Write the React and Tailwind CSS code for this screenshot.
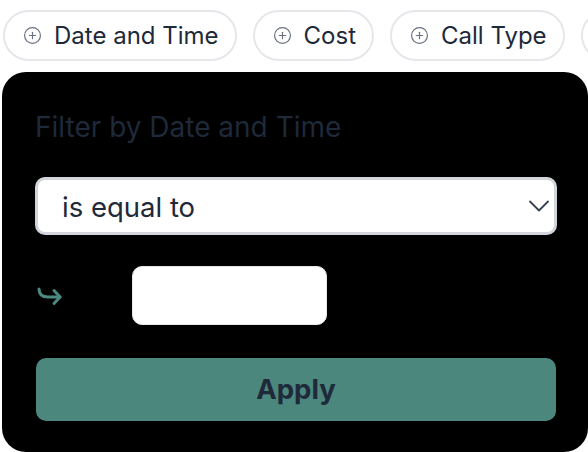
import React from 'react';
import { CirclePlus, ChevronDown } from 'lucide-react';

const chips = ['Date and Time', 'Cost', 'Call Type', 'Status'];

const Chip = ({ label }) => (
  <div className="h-[51px] shrink-0 rounded-full border-2 border-gray-200 bg-white pl-[18px] pr-[16px] flex items-center gap-[12px] text-[24px] text-gray-800">
    <CirclePlus className="w-[19px] h-[19px] text-gray-500" strokeWidth={1.5} />
    <span>{label}</span>
  </div>
);

export default function App() {
  return (
    <div className="w-[588px] h-[452px] bg-white overflow-hidden font-['Inter',sans-serif]">
      <div className="flex gap-[16px] pt-[10px] pl-[3px]">
        {chips.map((c) => (
          <Chip key={c} label={c} />
        ))}
      </div>

      <div className="ml-[2px] mt-[11px] w-[586px] h-[380px] bg-black rounded-[24px] pt-[38px] pl-[33px] pr-[29px]">
        <h3 className="text-[28px] leading-[34px] text-gray-800">Filter by Date and Time</h3>

        <div className="mt-[33px] h-[58px] w-[522px] rounded-[10px] border-[3px] border-gray-300 bg-white flex items-center justify-between pl-[24px]">
          <span className="text-[27.5px] leading-[34px] text-gray-800 translate-y-[1px]">is equal to</span>
          <ChevronDown className="w-[36px] h-[36px] -mr-[3px] text-gray-700" strokeWidth={1.2} />
        </div>

        <div className="mt-[31px] flex items-center">
          <svg width="28" height="24" viewBox="0 0 28 24" fill="none" stroke="#4a8a80" strokeWidth="3" strokeLinecap="round" strokeLinejoin="round">
            <path d="M4 5 q0 8 9 8 h12" />
            <path d="M19 6.5 l6 6.5 l-6 6.5" />
          </svg>
          <div className="ml-[69px] h-[59px] w-[195px] rounded-[10px] border border-gray-200 bg-white" />
        </div>

        <button className="mt-[33px] h-[63px] w-[520px] ml-[1px] rounded-[10px] bg-[#4b877d] text-[27.5px] font-bold text-gray-800">
          Apply
        </button>
      </div>
    </div>
  );
}
